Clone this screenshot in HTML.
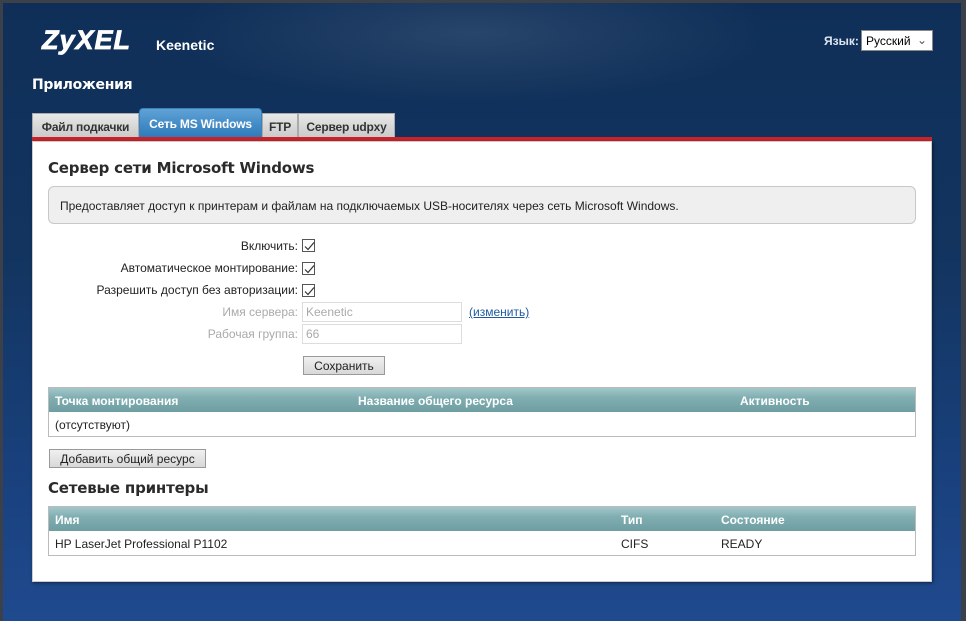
<!DOCTYPE html>
<html><head><meta charset="utf-8"><style>
*{margin:0;padding:0;box-sizing:border-box}
body{width:966px;height:621px;overflow:hidden;background:#3c4048;font-family:"Liberation Sans",sans-serif;font-size:12px;color:#222;position:relative}
#bg{position:absolute;left:3px;top:3px;width:958px;height:618px;background:radial-gradient(ellipse 300px 70px at 470px 30px,rgba(255,255,255,.10),rgba(255,255,255,0)),linear-gradient(180deg,#0f2f58 0%,#12345f 40%,#1a4280 80%,#1f4a8e 100%)}
.abs{position:absolute}
.logo{left:42px;top:25px;color:#fff;font:italic 900 27px "Liberation Sans",sans-serif;letter-spacing:1px;-webkit-text-stroke:.8px #fff}
.kee{left:156px;top:37px;color:#fff;font:bold 14px "Liberation Sans",sans-serif}
.app{left:32px;top:77px;color:#fff;font:bold 14px "DejaVu Sans",sans-serif;letter-spacing:-.3px}
.lang{left:824px;top:34px;color:#dfe6ef;font-size:12px;font-weight:bold}
.sel{left:861px;top:30px;width:72px;height:21px;background:#fff;border:1px solid #888;font-size:12px;padding:3px 4px;color:#000}
.tab{position:absolute;top:113px;height:25px;background:linear-gradient(#e8e8e8,#c9c9c9);border:1px solid #aaa;border-bottom:none;font-weight:bold;color:#333;font-size:12px;padding-top:6px;text-align:center;white-space:nowrap;letter-spacing:-.2px}
.tab.on{top:108px;height:30px;background:linear-gradient(#5fa2d6,#2d79b8);color:#fff;border-color:#3a82bf;border-radius:4px 4px 0 0;padding-top:8px}
#red{left:32px;top:137px;width:900px;height:4px;background:#c8232a}
#panel{left:32px;top:141px;width:900px;height:441px;background:#fff;border:1px solid #ccc;box-shadow:1px 1px 3px rgba(0,0,0,.5)}
h2{position:absolute;font:bold 15px "DejaVu Sans",sans-serif;color:#2a2a2a;letter-spacing:-.2px}
.info{left:48px;top:186px;width:868px;height:38px;background:#efefef;border:1px solid #c8c8c8;border-radius:6px;padding:12px 11px;font-size:12px}
.lbl{position:absolute;right:668px;font-size:12px}
.cb{position:absolute;left:302px;width:13px;height:13px;border:1px solid #555;background:#fff}
.cb svg{position:absolute;left:1px;top:1px}
.inp{position:absolute;left:302px;width:160px;height:20px;border:1px solid #ddd;color:#aaa;padding:2px 3px;font-size:12px}
.btn{position:absolute;height:19px;background:linear-gradient(#f0f0f0,#d8d8d8);border:1px solid #999;font-size:12px;color:#222;text-align:center;padding-top:2px}
.tbl{position:absolute;left:48px;width:868px;border:1px solid #bbb}
.th{height:24px;background:linear-gradient(#a3c7c9,#80aeb1 40%,#6f9ea2);color:#fff;font-weight:bold;position:relative}
.th span,.tr span{position:absolute;top:6px}
.tr{height:24px;position:relative;background:#fff}
</style></head><body>
<div id="bg"></div>
<div class="abs logo">ZyXEL</div>
<div class="abs kee">Keenetic</div>
<div class="abs app">Приложения</div>
<div class="abs lang">Язык:</div>
<div class="abs sel">Русский<span style="position:absolute;right:5px;top:2px;color:#555">&#8964;</span></div>
<div class="tab" style="left:32px;width:107px">Файл подкачки</div>
<div class="tab on" style="left:139px;width:123px">Сеть MS Windows</div>
<div class="tab" style="left:262px;width:36px">FTP</div>
<div class="tab" style="left:298px;width:97px">Сервер udpxy</div>
<div class="abs" id="red"></div>
<div class="abs" id="panel"></div>
<h2 style="left:48px;top:159px">Сервер сети Microsoft Windows</h2>
<div class="abs info">Предоставляет доступ к принтерам и файлам на подключаемых USB-носителях через сеть Microsoft Windows.</div>
<div class="lbl" style="top:239px">Включить:</div>
<div class="lbl" style="top:261px">Автоматическое монтирование:</div>
<div class="lbl" style="top:283px">Разрешить доступ без авторизации:</div>
<div class="cb" style="top:239px"><svg width="11" height="11"><path d="M1 5.5L4 8.5L10 1.5" stroke="#333" fill="none" stroke-width="1.2"/></svg></div>
<div class="cb" style="top:262px"><svg width="11" height="11"><path d="M1 5.5L4 8.5L10 1.5" stroke="#333" fill="none" stroke-width="1.2"/></svg></div>
<div class="cb" style="top:284px"><svg width="11" height="11"><path d="M1 5.5L4 8.5L10 1.5" stroke="#333" fill="none" stroke-width="1.2"/></svg></div>
<div class="lbl" style="top:305px;color:#aaa">Имя сервера:</div>
<div class="lbl" style="top:327px;color:#aaa">Рабочая группа:</div>
<div class="inp" style="top:302px">Keenetic</div>
<div class="inp" style="top:324px">66</div>
<div class="abs" style="left:469px;top:305px;color:#1f5aa0;text-decoration:underline">(изменить)</div>
<div class="btn" style="left:303px;top:356px;width:82px">Сохранить</div>
<div class="tbl" style="top:387px">
<div class="th"><span style="left:6px">Точка монтирования</span><span style="left:309px">Название общего ресурса</span><span style="left:691px">Активность</span></div>
<div class="tr"><span style="left:6px">(отсутствуют)</span></div>
</div>
<div class="btn" style="left:49px;top:449px;width:157px">Добавить общий ресурс</div>
<h2 style="left:48px;top:479px">Сетевые принтеры</h2>
<div class="tbl" style="top:506px">
<div class="th"><span style="left:6px">Имя</span><span style="left:572px">Тип</span><span style="left:672px">Состояние</span></div>
<div class="tr"><span style="left:6px">HP LaserJet Professional P1102</span><span style="left:572px">CIFS</span><span style="left:672px">READY</span></div>
</div>
</body></html>
